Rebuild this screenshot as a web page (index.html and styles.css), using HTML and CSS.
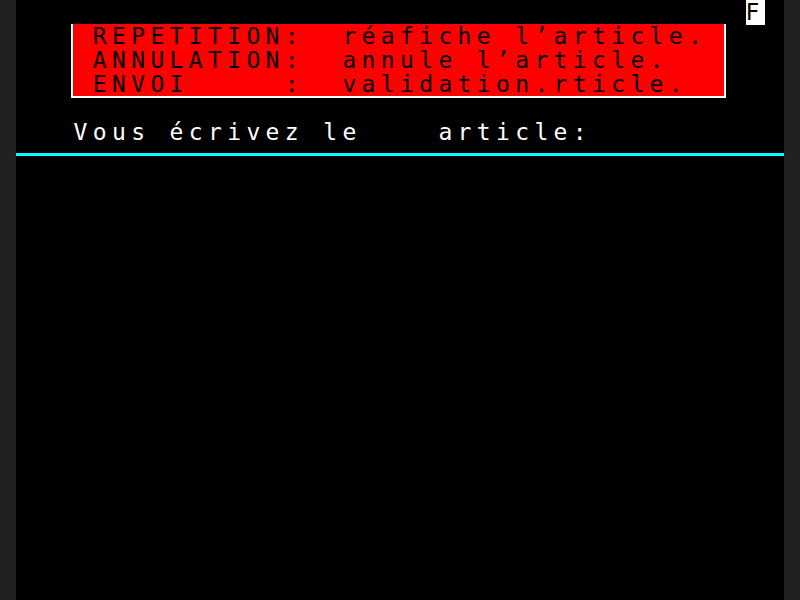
FILE: index.html
```html
<!DOCTYPE html>
<html lang="fr">
<head>
<meta charset="utf-8">
<title>Minitel</title>
<link rel="stylesheet" href="styles.css">
</head>
<body>
<div class="screen">
  <div class="row">                                      <span class="inv">F</span></div>
  <div class="panel">
    <div class="row">REPETITION:  réafiche l’article.</div>
    <div class="row">ANNULATION:  annule l’article.</div>
    <div class="row">ENVOI     :  validation.rticle.</div>
  </div>
  <div class="row prompt">Vous écrivez le    article:</div>
  <div class="rule"></div>
</div>
</body>
</html>
```
FILE: styles.css
```css
html, body {
  margin: 0;
  padding: 0;
  background: #212121;
}
.screen {
  width: 768px;
  height: 600px;
  margin: 0 auto;
  background: #000;
  color: #fff;
  font-family: "DejaVu Sans Mono", "Liberation Mono", monospace;
  font-size: 23px;
  line-height: 24px;
  overflow: hidden;
}
.row {
  height: 24px;
  white-space: pre;
  letter-spacing: calc(19.2px - 1ch);
}
.inv {
  background: #fff;
  color: #000;
}
.panel {
  margin-left: 55px;
  width: 631.2px;
  padding-left: 19.8px;
  background: #ff0000;
  color: #000;
  border-left: 2px solid #fff;
  border-right: 2px solid #fff;
  border-bottom: 2px solid #fff;
}
.prompt {
  margin-top: 22px;
  padding-left: 57.6px;
}
.rule {
  margin-top: 9px;
  height: 3px;
  background: #00ffff;
}
```
